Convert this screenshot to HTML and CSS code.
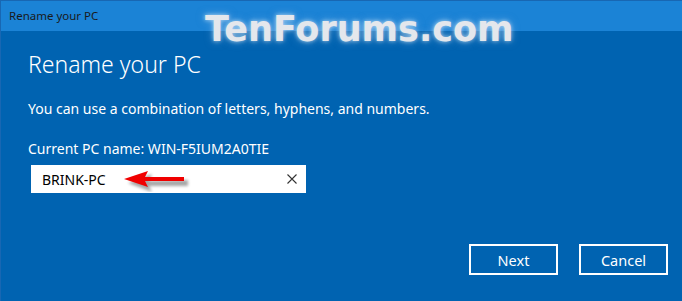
FILE: index.html
```html
<!DOCTYPE html>
<html>
<head>
<meta charset="utf-8">
<link rel="stylesheet" href="styles.css">
</head>
<body>
<div class="window">
  <div class="titlebar">Rename your PC</div>
  <div class="watermark">TenForums.com</div>
  <div class="content">
    <h1 class="heading">Rename your PC</h1>
    <p class="desc">You can use a combination of letters, hyphens, and numbers.</p>
    <p class="current">Current PC name: WIN-F5IUM2A0TIE</p>
    <div class="inputbox">
      <span class="value">BRINK-PC</span>
      <svg class="arrow" width="70" height="26" viewBox="0 0 70 26">
        <defs>
          <filter id="sh" x="-20%" y="-50%" width="140%" height="200%">
            <feGaussianBlur stdDeviation="1.6"/>
          </filter>
        </defs>
        <path d="M4 15 L28 6 L25 13 L64 12 L64 18 L25 18 L28 24 Z" fill="#000" opacity="0.35" filter="url(#sh)" transform="translate(2 2)"/>
        <path d="M2 13 L26 5 L23 11 L62 11 L62 15 L23 15 L26 21 Z" fill="#f00000"/>
      </svg>
      <svg class="clear" width="10" height="10" viewBox="0 0 10 10">
        <path d="M0.5 0.5 L9.5 9.5 M9.5 0.5 L0.5 9.5" stroke="#333" stroke-width="1.1" fill="none"/>
      </svg>
    </div>
  </div>
  <div class="buttons">
    <button class="btn">Next</button>
    <button class="btn">Cancel</button>
  </div>
</div>
</body>
</html>
```
FILE: styles.css
```css
html, body {
  margin: 0;
  padding: 0;
  background: #0063b1;
}
.window {
  position: relative;
  width: 682px;
  height: 301px;
  box-sizing: border-box;
  border-top: 1px solid #1867b3;
  border-left: 1px solid #1867b3;
  background: #0063b1;
  font-family: "Noto Sans", "Open Sans", sans-serif;
  color: #ffffff;
  display: flex;
  flex-direction: column;
}
.titlebar {
  height: 30px;
  line-height: 29px;
  background: #1b83d6;
  color: #1a1a1a;
  font-size: 11.5px;
  padding-left: 8px;
}
.watermark {
  position: absolute;
  left: 204px;
  top: 8px;
  font-family: "DejaVu Sans", sans-serif;
  font-weight: bold;
  font-size: 35px;
  color: #e4e7ec;
  text-shadow: 0 0 4px rgba(255,255,255,0.6), 0 0 8px rgba(160,200,240,0.5);
}
.content {
  padding-left: 27px;
  display: flex;
  flex-direction: column;
  align-items: flex-start;
}
.heading {
  margin: 18px 0 0 0;
  font-size: 23px;
  font-weight: 300;
  line-height: 30px;
}
.desc {
  margin: 20px 0 0 0;
  font-size: 14px;
  line-height: 20px;
}
.current {
  margin: 20px 0 0 0;
  font-size: 14px;
  line-height: 20px;
}
.inputbox {
  margin: 6px 0 0 3px;
  width: 275px;
  height: 28px;
  background: #ffffff;
  display: flex;
  align-items: center;
  position: relative;
  color: #000;
}
.value {
  font-size: 14px;
  margin-left: 11px;
}
.arrow {
  position: absolute;
  left: 91px;
  top: 1px;
}
.clear {
  position: absolute;
  right: 9px;
  top: 9px;
}
.buttons {
  margin-top: auto;
  margin-bottom: 26px;
  display: flex;
  justify-content: flex-end;
  gap: 21px;
  padding-right: 14px;
}
.btn {
  width: 89px;
  height: 31px;
  box-sizing: border-box;
  border: 2px solid #ffffff;
  background: transparent;
  color: #ffffff;
  font-family: "Noto Sans", "Open Sans", sans-serif;
  font-size: 14.5px;
  padding: 0;
}
```
